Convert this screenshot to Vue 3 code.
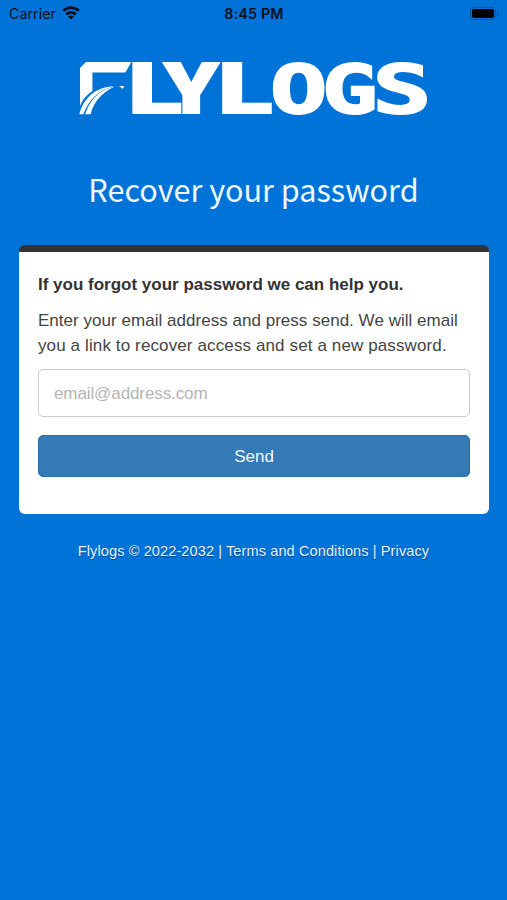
<template>
  <div class="screen">
    <header class="status-bar">
      <div class="carrier">
        <span>Carrier</span>
        <svg class="wifi" viewBox="0 0 18 14" width="18" height="14">
          <g fill="none" stroke="#04101c" stroke-width="2.8">
            <path d="M1.2 4.8C5.6 0.6 12.4 0.6 16.8 4.8" />
            <path d="M4.2 8.4C7 5.8 11 5.8 13.8 8.4" />
          </g>
          <path d="M9 13.4L6 10.6C7.8 9.1 10.2 9.1 12 10.6Z" fill="#04101c" />
        </svg>
      </div>
      <span class="time">8:45 PM</span>
      <div class="battery">
        <div class="battery-body"><div class="battery-level"></div></div>
        <div class="battery-tip"></div>
      </div>
    </header>

    <svg class="logo" viewBox="78 60 352 57" width="352" height="57">
      <text
        v-for="(l, i) in letters"
        :key="i"
        :class="['logo-letter', { square: l.square }]"
        :transform="`translate(${l.x} 113.4) scale(${l.scale} 1)`"
      >{{ l.char }}</text>
      <!-- cut the F open for the runway and the plane -->
      <g fill="#0073d8">
        <path d="M78 60H88L79 69H78Z" />
        <path d="M92.4 72.6H131.4V117H78L79.5 107Q83 97 92.4 91Z" />
        <path d="M132 61L125 73H131.4Z" />
      </g>
      <g fill="#fff">
        <path d="M79.4 114.3C83 99 95 86.8 114 86.2C99 90 89 99 83.3 114.3Z" />
        <path d="M85.2 114.3C89 101 99 89.5 115 86.5C102 92.5 94 101 90.6 114.3Z" />
        <path d="M119 86L124.4 86L122.6 89L121 87.4Z" />
      </g>
    </svg>

    <h1>Recover your password</h1>

    <form class="card" @submit.prevent>
      <p class="lead">If you forgot your password we can help you.</p>
      <p class="help">
        Enter your email address and press send. We will email<br />
        <span class="help-end">you a link to recover access and set a new password.</span>
      </p>
      <input v-model="email" type="email" placeholder="email@address.com" />
      <button type="submit">Send</button>
    </form>

    <footer>
      Flylogs © 2022-2032 | <a>Terms and Conditions</a> | <a>Privacy</a>
    </footer>
  </div>
</template>

<script setup>
import { ref } from 'vue'

const email = ref('')

const letters = [
  { char: 'F', x: 76, scale: 1.44 },
  { char: 'L', x: 128.4, scale: 1.4 },
  { char: 'Y', x: 164, scale: 1.24 },
  { char: 'L', x: 218.2, scale: 1.42 },
  { char: 'O', x: 270, scale: 1.41, square: true },
  { char: 'G', x: 321.7, scale: 1.38, square: true },
  { char: 'S', x: 372.5, scale: 1.45, square: true },
]
</script>

<style>
body {
  margin: 0;
  background: #0073d8;
}
</style>

<style scoped>
.screen {
  box-sizing: border-box;
  display: flex;
  flex-direction: column;
  width: 507px;
  height: 900px;
  overflow: hidden;
  background: #0073d8;
  font-family: 'Liberation Sans', Arial, sans-serif;
}

.status-bar {
  display: grid;
  grid-template-columns: 1fr auto 1fr;
  align-items: center;
  height: 27px;
  padding: 0 8px 0 9px;
  color: #04101c;
  font-family: Inter, sans-serif;
  font-size: 14.3px;
}

.carrier {
  display: flex;
  align-items: center;
  gap: 6px;
}

.wifi {
  margin-top: -2px;
}

.time {
  font-weight: 600;
  letter-spacing: 0.15px;
}

.battery {
  display: flex;
  align-items: center;
  justify-content: flex-end;
  gap: 1px;
}

.battery-body {
  box-sizing: border-box;
  width: 26px;
  height: 13px;
  padding: 1px;
  border: 1px solid #06539a;
  border-radius: 4px;
}

.battery-level {
  height: 9px;
  border-radius: 2px;
  background: #000;
}

.battery-tip {
  width: 2px;
  height: 4px;
  border-radius: 0 2px 2px 0;
  background: #06539a;
}

.logo {
  flex: none;
  margin: 33px 0 0 78px;
  overflow: visible;
}

.logo-letter {
  fill: #fff;
  stroke: #fff;
  stroke-width: 2;
  font-family: Roboto, sans-serif;
  font-size: 70px;
  font-weight: 900;
}

.logo-letter.square {
  font-family: 'DejaVu Sans Mono', monospace;
  font-size: 67.5px;
  font-weight: 700;
}

h1 {
  margin: 47px 0 0;
  color: #eef7ff;
  font-family: 'Noto Sans CJK SC', sans-serif;
  font-size: 30.6px;
  font-weight: 400;
  line-height: 50px;
  text-align: center;
}

.card {
  box-sizing: border-box;
  display: flex;
  flex-direction: column;
  height: 269px;
  margin: 31px 18px 0 19px;
  padding: 21px 19px 0;
  border-top: 7px solid #333;
  border-radius: 6px;
  background: #fff;
  color: #333;
}

p {
  margin: 0;
  white-space: nowrap;
}

.lead {
  font-size: 17px;
  font-weight: bold;
  line-height: 24px;
}

.help {
  margin-top: 12px;
  color: #444;
  font-size: 17px;
  letter-spacing: 0.03px;
  line-height: 24.5px;
}

.help-end {
  letter-spacing: 0.12px;
}

input {
  box-sizing: border-box;
  width: 100%;
  height: 48px;
  margin: 11px 0 0;
  padding: 2px 15px 0;
  border: 1px solid #ccc;
  border-radius: 5px;
  background: #fff;
  font-family: inherit;
  font-size: 17px;
  letter-spacing: -0.1px;
}

input::placeholder {
  color: #b5b5b5;
}

button {
  height: 42px;
  margin: 18px 0 0;
  padding: 2px 0 0;
  border: 1px solid #2e6da4;
  border-radius: 5px;
  background: #337ab7;
  color: #f3f8fc;
  font-family: inherit;
  font-size: 17px;
}

footer {
  margin-top: 27px;
  color: #e8f2fb;
  font-size: 14.5px;
  letter-spacing: 0.12px;
  line-height: 20px;
  text-align: center;
  text-shadow: 0 1px 1px rgba(0, 0, 0, 0.4);
}
</style>
